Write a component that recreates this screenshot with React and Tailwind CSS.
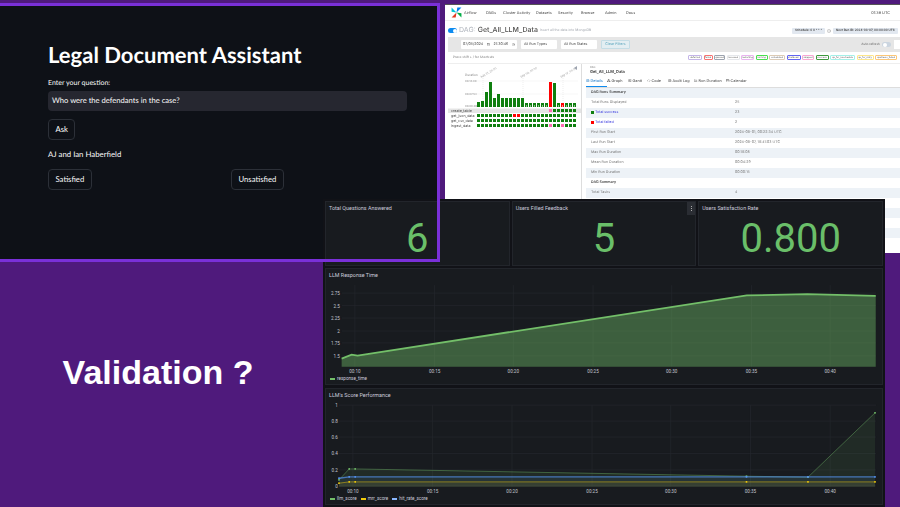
import React from 'react';
import { BarChart3, Calendar, Clock, Code, FileText, Info, Network, SlidersHorizontal } from 'lucide-react';

const grafanaFont = { fontFamily: 'Roboto, sans-serif' };

const navItems = [
  ['DAGs', 'w-[17px]'],
  ['Cluster Activity', 'w-[33px]'],
  ['Datasets', 'w-[22px]'],
  ['Security', 'w-[23px]'],
  ['Browse', 'w-[24px]'],
  ['Admin', 'w-[21px]'],
  ['Docs', 'w-[20px]'],
];

const states = [
  ['deferred', 'w-[14px] border-[#c4b5e8]'],
  ['failed', 'w-[9px] border-[#f87171]'],
  ['queued', 'w-[11px] border-[#9ca3af]'],
  ['removed', 'w-[13px] border-[#e5e7eb]'],
  ['restarting', 'w-[13px] border-[#e9b4f0]'],
  ['running', 'w-[12px] border-[#4ade50]'],
  ['scheduled', 'w-[16px] border-[#dccbb5]'],
  ['shutdown', 'w-[14px] border-[#6366f1]'],
  ['skipped', 'w-[12px] border-[#f9a8d4]'],
  ['success', 'w-[13px] border-[#3f9a3f]'],
  ['up_for_reschedule', 'w-[25px] border-[#a5f0e8]'],
  ['up_for_retry', 'w-[17px] border-[#fde68a]'],
  ['upstream_failed', 'w-[22px] border-[#fcc777]'],
];

const tabs = [
  ['Details', 'w-[21px]', FileText],
  ['Graph', 'w-[21px]', Network],
  ['Gantt', 'w-[19px]', SlidersHorizontal],
  ['Code', 'w-[21px]', Code],
  ['Audit Log', 'w-[26px]', FileText],
  ['Run Duration', 'w-[32px]', BarChart3],
  ['Calendar', 'w-[30px]', Calendar],
];

// rows past Total Tasks sit behind the grafana window, only their stripes show
const summaryRows = [
  ['DAG Runs Summary', '', 'head'],
  ['Total Runs Displayed', '25'],
  ['Total success', '23', 'success'],
  ['Total failed', '2', 'failed'],
  ['First Run Start', '2024-08-01, 00:22:34 UTC'],
  ['Last Run Start', '2024-08-07, 18:41:03 UTC'],
  ['Max Run Duration', '00:18:08'],
  ['Mean Run Duration', '00:04:29'],
  ['Min Run Duration', '00:00:15'],
  ['DAG Summary', '', 'head'],
  ['Total Tasks', '4'],
  ['', ''],
  ['', ''],
  ['', ''],
  ['', ''],
  ['', ''],
];

const barHeights = [5, 6, 15, 25, 9, 13, 9, 9, 9, 9, 9, 9, 4, 4, 4, 4, 4, 4, 25, 24, 4, 4, 4, 4, 4];
const failedBars = [18, 21];
const gridRows = [
  { name: 'create_table', y: 109, from: 18, red: [], pink: [18] },
  { name: 'get_json_data', y: 114, from: 0, red: [9, 10], pink: [] },
  { name: 'get_csv_data', y: 119, from: 0, red: [], pink: [] },
  { name: 'ingest_data', y: 124, from: 0, red: [], pink: [18, 21] },
];

function AirflowGrid() {
  const colX = (i) => 477 + i * 4;
  return (
    <svg viewBox="448 64 133 68" className="block w-[133px] h-[68px]" style={{ fontFamily: 'Inter, sans-serif' }}>
      {[81, 94, 106].map((y) => (
        <line key={y} x1="476" x2="578" y1={y} y2={y} stroke="#eeeeee" strokeWidth="0.5" />
      ))}
      {[483, 523, 563].map((x) => (
        <line key={x} x1={x} x2={x} y1="74" y2="107" stroke="#dddddd" strokeWidth="0.5" strokeDasharray="1 1" />
      ))}
      <rect x="448" y="108.5" width="133" height="4.5" fill="#e5e5e5" />
      <text x="465" y="76" fontSize="3.2" fill="#888888">Duration</text>
      <text x="465" y="82" fontSize="2.8" fill="#888888">00:18:00</text>
      <text x="465" y="95" fontSize="2.8" fill="#888888">00:07:53</text>
      <text x="465" y="107" fontSize="2.8" fill="#888888">00:00:00</text>
      {[[481, 'Aug 31, 20:00'], [521, 'Sep 04, 00:00'], [561, 'Sep 07, 00:00']].map(([x, label]) => (
        <text key={x} x={x} y="78" fontSize="2.8" fill="#999999" transform={`rotate(-30 ${x} 78)`}>{label}</text>
      ))}
      <path d="M577 66l-3 2 3 2z" fill="#9ca3af" />
      {barHeights.map((h, i) => (
        <g key={i}>
          <rect x={colX(i)} y={107 - h} width="3" height={h} fill={failedBars.includes(i) ? '#ff0000' : '#0f7f0f'} />
          {h === 4 && <rect x={colX(i) + 1} y="105.5" width="1" height="1" fill="#ffffff" />}
        </g>
      ))}
      {gridRows.map((row) => (
        <g key={row.name}>
          <text x="451" y={row.y + 3} fontSize="3.6" fill="#444444">{row.name}</text>
          {barHeights.map((_, i) => i >= row.from && (
            <rect
              key={i}
              x={colX(i)}
              y={row.y}
              width="3"
              height="3"
              fill={row.red.includes(i) ? '#ff0000' : row.pink.includes(i) ? '#ff69b4' : '#0f7f0f'}
            />
          ))}
        </g>
      ))}
    </svg>
  );
}

function AirflowLogo() {
  return (
    <svg viewBox="0 0 20 20" className="w-[11px] h-[11px] shrink-0">
      <path d="M10 10L1 19h7.5z" fill="#e43921" />
      <path d="M10 10L1 1v7.5z" fill="#00c7d4" />
      <path d="M10 10L19 1h-7.5z" fill="#017cee" />
      <path d="M10 10l9 9v-7.5z" fill="#00ad46" />
    </svg>
  );
}

function Airflow() {
  return (
    <div className="absolute left-[445px] top-[4px] w-[455px] h-[249px] bg-white overflow-hidden border-t border-[#555555] flex flex-col blur-[0.35px] [text-rendering:geometricPrecision]" style={{ fontFamily: 'Inter, sans-serif' }}>
      <div className="h-[16px] shrink-0 flex items-center pl-[6px] border-b border-[#eeeeee] text-[3.8px] whitespace-nowrap text-[#444444]">
        <AirflowLogo />
        <span className="w-[24px] pl-[2px] text-[#51504f]">Airflow</span>
        {navItems.map(([name, w]) => (
          <span key={name} className={w}>{name}</span>
        ))}
        <span className="ml-auto pr-[10px]">01:38 UTC</span>
      </div>

      <div className="h-[13px] mt-[3px] shrink-0 flex items-center pl-[3px] pr-[2px] whitespace-nowrap">
        <span className="w-[9px] h-[5px] rounded-full bg-[#0d8bf0] flex justify-end items-center pr-[0.5px] mr-[2px]">
          <span className="w-[4px] h-[4px] rounded-full bg-white" />
        </span>
        <span className="text-[#b0b5bd] text-[7px] mr-[2px]">DAG:</span>
        <span className="text-[#51504f] text-[7px] font-medium mr-[2px]">Get_All_LLM_Data</span>
        <span className="text-[#a0a5ad] text-[3.4px]">Insert all the data into MongoDB</span>
        <span className="ml-auto w-[33px] h-[6px] rounded-[1px] bg-[#e2e8f0] text-[#444444] font-semibold text-[3px] flex items-center justify-center">Schedule: 0 0 * * *</span>
        <Info className="w-[4px] h-[4px] mx-[2px] text-[#888888]" />
        <span className="w-[65px] h-[6px] rounded-[1px] bg-[#e2e8f0] text-[#444444] font-semibold text-[3px] flex items-center justify-center">Next Run ID: 2024-08-07, 00:00:00 UTC</span>
      </div>

      <div className="h-[15px] ml-[3px] shrink-0 bg-[#e6e6e6] flex items-center text-[3.6px] whitespace-nowrap text-[#444444] pl-[13px]">
        <span className="w-[56px] h-[9px] bg-white rounded-[1px] flex items-center justify-between px-[2px]">
          <span>07/05/2024</span>
          <Calendar className="w-[3px] h-[3px]" />
          <span>21:30:46</span>
          <Clock className="w-[3px] h-[3px]" />
        </span>
        <span className="w-[36px] h-[9px] ml-[4px] bg-white rounded-[1px] flex items-center px-[3px]">All Run Types</span>
        <span className="w-[36px] h-[9px] ml-[4px] bg-white rounded-[1px] flex items-center px-[3px]">All Run States</span>
        <span className="w-[29px] h-[9px] ml-[4px] bg-[#e3eef2] border border-[#c4dde6] rounded-[1px] flex items-center justify-center text-[#5aa5bd]">Clear Filters</span>
        <span className="ml-auto text-[3.2px] text-[#666666]">Auto refresh</span>
        <span className="w-[9px] h-[5px] ml-[2px] rounded-full bg-[#cbd5e0] flex items-center pl-[0.5px]">
          <span className="w-[4px] h-[4px] rounded-full bg-white" />
        </span>
        <span className="w-[6px] h-[9px] ml-[3px] bg-white" />
      </div>

      <div className="h-[11px] shrink-0 flex items-center justify-between pl-[8px] pr-[3px] whitespace-nowrap">
        <span className="text-[3.2px] text-[#777777]">Press shift + / for Shortcuts</span>
        <div className="flex gap-[1.5px]">
          {states.map(([name, cls]) => (
            <span key={name} className={`${cls} h-[5px] border-[0.6px] rounded-[1px] text-[2.4px] text-[#555555] flex items-center justify-center overflow-hidden`}>{name}</span>
          ))}
        </div>
      </div>

      <div className="flex flex-1 min-h-0 border-t border-[#eeeeee] ml-[3px]">
        <div className="w-[133px] shrink-0">
          <AirflowGrid />
        </div>
        <div className="flex-1 min-w-0 border-l border-[#dddddd] pl-[4px]">
          <div className="h-[12px] flex flex-col justify-center pl-[4px]">
            <span className="text-[2.6px] text-[#888888] leading-none">DAG</span>
            <span className="text-[4px] font-semibold text-[#333333] leading-tight">Get_All_LLM_Data</span>
          </div>
          <div className="h-[12px] flex items-start pt-[1px] border-b border-[#dddddd] text-[3.8px] whitespace-nowrap text-[#444444]">
            {tabs.map(([name, w, Icon], i) => (
              <span key={name} className={`${w} h-[10px] flex items-start pt-[1px] gap-[1px] ${i === 0 ? 'border-b border-[#0d8bf0] text-[#0d6fc4]' : ''}`}>
                <Icon className="w-[3.5px] h-[3.5px] mt-[0.5px] shrink-0" />
                {name}
              </span>
            ))}
          </div>
          <div>
            {summaryRows.map(([label, value, kind], i) => (
              <div key={i} className={`h-[10px] flex items-center text-[3.6px] ${i % 2 === 0 ? 'bg-[#edf2f7]' : 'bg-white'}`}>
                <span className={`w-[149px] pl-[5px] flex items-center gap-[1px] ${kind === 'head' ? 'font-semibold text-[#444444]' : kind ? 'text-[#3333dd]' : 'text-[#777777]'}`}>
                  {kind === 'success' && <span className="w-[3px] h-[3px] bg-[#0f7f0f]" />}
                  {kind === 'failed' && <span className="w-[3px] h-[3px] bg-[#ff0000]" />}
                  {label}
                </span>
                <span className="text-[#777777]">{value}</span>
              </div>
            ))}
          </div>
        </div>
      </div>
    </div>
  );
}

function Stat({ title, value, menu }) {
  return (
    <div className="relative h-full bg-[#181b1f] border border-[#22252b] flex flex-col">
      <div className="h-[13px] pl-[3px] pt-[3px] text-[5.4px] leading-[7px] text-[#ccccdc]">{title}</div>
      <div className="flex-1 flex items-center justify-center text-[40px] leading-none text-[#6abf69] pb-[3px]">{value}</div>
      {menu && (
        <div className="absolute right-0 top-0 w-[8px] h-[13px] bg-[#2a2d33] flex flex-col items-center justify-center gap-[1px]">
          <span className="w-[1px] h-[1px] bg-[#aaaaaa]" />
          <span className="w-[1px] h-[1px] bg-[#aaaaaa]" />
          <span className="w-[1px] h-[1px] bg-[#aaaaaa]" />
        </div>
      )}
    </div>
  );
}

function Legend({ items }) {
  return (
    <div className="flex-1 flex items-center pl-[4px] gap-[4px] text-[4.6px] text-[#ccccdc]">
      {items.map(([name, color]) => (
        <span key={name} className="flex items-center gap-[2px]">
          <span className={`w-[5px] h-[1.5px] ${color}`} />
          {name}
        </span>
      ))}
    </div>
  );
}

function ResponseChart() {
  const yTicks = [[293, '2.75'], [305.5, '2.5'], [318, '2.25'], [331, '2'], [343, '1.75'], [356, '1.5']];
  const xTicks = [[354, '00:10'], [434, '00:15'], [513, '00:20'], [593, '00:25'], [672, '00:30'], [752, '00:35'], [831, '00:40']];
  const line = '340.7,358.7 350.7,354.7 356.7,355.7 747.3,295.3 808,294 876.7,295.7';
  return (
    <svg viewBox="325 282 558 92" className="block w-[556px] h-[92px] shrink-0">
      {yTicks.map(([y, label]) => (
        <g key={label}>
          <line x1="341" x2="877" y1={y} y2={y} stroke="#24272c" strokeWidth="0.7" />
          <text x="339" y={y + 2} fontSize="4.6" fill="#c4c7d0" textAnchor="end">{label}</text>
        </g>
      ))}
      {xTicks.map(([x, label]) => (
        <g key={label}>
          <line x1={x} x2={x} y1="285" y2="367" stroke="#24272c" strokeWidth="0.7" />
          <text x={x} y="373" fontSize="4.6" fill="#c4c7d0" textAnchor="middle">{label}</text>
        </g>
      ))}
      <polygon points={`${line} 876.7,367 340.7,367`} fill="#73bf69" fillOpacity="0.42" />
      <polyline points={line} fill="none" stroke="#73bf69" strokeWidth="1.8" />
    </svg>
  );
}

function ScoreChart() {
  const yTicks = [[405, '1'], [421, '0.8'], [437, '0.6'], [453.5, '0.4'], [470, '0.2'], [486, '0']];
  const xTicks = [[352, '00:10'], [432, '00:15'], [511.7, '00:20'], [592, '00:25'], [671, '00:30'], [751, '00:35'], [831, '00:40']];
  const series = [
    { color: '#73bf69', width: 0.6, opacity: 0.1, pts: [[338, 480], [348.3, 469], [354.3, 469], [747, 476.3], [808.7, 477.3], [876, 412.7]] },
    { color: '#5794f2', width: 1.4, opacity: 0.08, pts: [[338, 478.3], [348.3, 477], [354.3, 477], [747, 477], [808.7, 477], [876, 477]] },
    { color: '#f2cc0c', width: 0.7, opacity: 0.08, pts: [[338, 483.3], [348.3, 482], [354.3, 482], [747, 482], [808.7, 482], [876, 482]] },
  ];
  return (
    <svg viewBox="325 402 558 92" className="block w-[556px] h-[92px] shrink-0">
      {yTicks.map(([y, label]) => (
        <g key={label}>
          <line x1="338" x2="877" y1={y} y2={y} stroke="#24272c" strokeWidth="0.7" />
          <text x="337" y={y + 2} fontSize="4.6" fill="#c4c7d0" textAnchor="end">{label}</text>
        </g>
      ))}
      {xTicks.map(([x, label]) => (
        <g key={label}>
          <line x1={x} x2={x} y1="405" y2="487" stroke="#24272c" strokeWidth="0.7" />
          <text x={x} y="493" fontSize="4.6" fill="#c4c7d0" textAnchor="middle">{label}</text>
        </g>
      ))}
      {series.map((s) => {
        const line = s.pts.map((p) => p.join(',')).join(' ');
        return (
          <g key={s.color}>
            <polygon points={`${line} 876,487 338,487`} fill={s.color} fillOpacity={s.opacity} />
            <polyline points={line} fill="none" stroke={s.color} strokeOpacity="0.7" strokeWidth={s.width} />
            {s.pts.map(([x, y]) => (
              <rect key={x} x={x - 0.8} y={y - 0.8} width="1.6" height="1.6" fill={s.color} />
            ))}
          </g>
        );
      })}
    </svg>
  );
}

function Grafana() {
  return (
    <div className="absolute left-[323px] top-[199px] w-[562px] h-[308px] bg-[#111217] flex flex-col px-[2px] pt-[2px] gap-[2px]" style={grafanaFont}>
      <div className="grid grid-cols-3 gap-[2px] h-[65px] shrink-0">
        <Stat title="Total Questions Answered" value="6" />
        <Stat title="Users Filled Feedback" value="5" menu />
        <Stat title="Users Satisfaction Rate" value="0.800" />
      </div>
      <div className="h-[117px] shrink-0 bg-[#181b1f] border border-[#22252b] flex flex-col">
        <div className="h-[13px] shrink-0 pl-[3px] pt-[3px] text-[5.4px] leading-[7px] text-[#ccccdc]">LLM Response Time</div>
        <ResponseChart />
        <Legend items={[['response_time', 'bg-[#73bf69]']]} />
      </div>
      <div className="h-[117px] mt-[1px] shrink-0 bg-[#181b1f] border border-[#22252b] flex flex-col">
        <div className="h-[13px] shrink-0 pl-[3px] pt-[3px] text-[5.4px] leading-[7px] text-[#ccccdc]">LLM's Score Performance</div>
        <ScoreChart />
        <Legend items={[['llm_score', 'bg-[#73bf69]'], ['mrr_score', 'bg-[#f2cc0c]'], ['hit_rate_score', 'bg-[#8ab8ff]']]} />
      </div>
    </div>
  );
}

function Streamlit() {
  const btn = 'h-[21px] px-[6.5px] border border-[#2c3038] rounded-[4px] text-[7.7px] text-[#fafafa] bg-[#0e1117] flex items-center';
  return (
    <div className="absolute left-0 top-[3px] w-[439px] h-[259px] bg-[#0e1117] pl-[48px] pr-[32px] pt-[40px] flex flex-col [text-rendering:geometricPrecision]" style={{ fontFamily: 'Lato, sans-serif' }}>
      <h1 className="text-[22px] leading-[24px] font-bold text-white">Legal Document Assistant</h1>
      <label className="mt-[12px] text-[7px] leading-[9px] text-[#fafafa]">Enter your question:</label>
      <div className="mt-[3px] h-[20px] rounded-[4px] bg-[#262730] pl-[4px] flex items-center text-[7.6px] text-[#fafafa]">Who were the defendants in the case?</div>
      <div className="mt-[8px]">
        <button className={btn}>Ask</button>
      </div>
      <p className="mt-[9px] text-[7.8px] leading-[11px] text-[#fafafa]">AJ and Ian Haberfield</p>
      <div className="mt-[9px] grid grid-cols-2 gap-[7px] justify-items-start">
        <button className={btn}>Satisfied</button>
        <button className={btn}>Unsatisfied</button>
      </div>
    </div>
  );
}

export default function App() {
  return (
    <div className="relative w-[900px] h-[507px] overflow-hidden bg-[#4f1a7c]">
      <Streamlit />
      <Airflow />
      <Grafana />
      {/* purple outline sits on top of the grafana window */}
      <div className="absolute left-0 top-[3px] w-[440px] h-[259px] border-t-[3px] border-r-[3px] border-b-[3px] border-[#7a30d8] pointer-events-none" />
      <div className="absolute left-0 top-[262px] w-[316px] h-[245px] flex items-start justify-center pt-[92px]">
        <h2 className="text-[34px] leading-[36px] font-bold text-white" style={{ fontFamily: '"Liberation Sans", sans-serif' }}>Validation ?</h2>
      </div>
    </div>
  );
}
